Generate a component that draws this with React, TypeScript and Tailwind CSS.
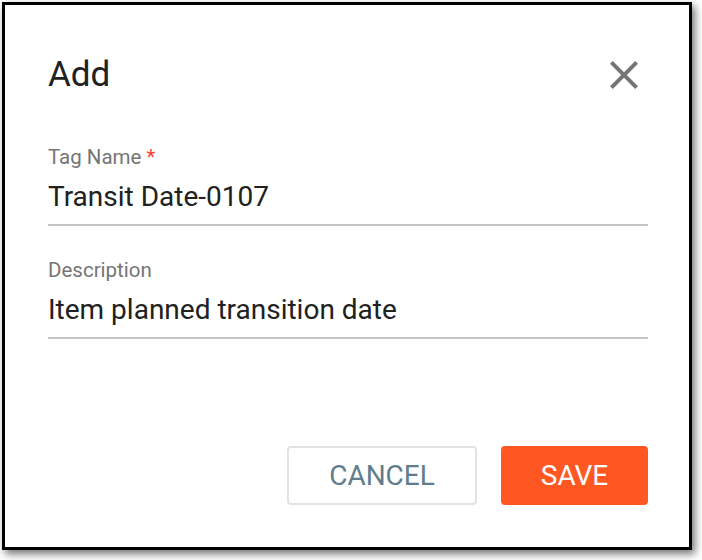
function Field({
  label,
  value,
  required,
}: {
  label: string;
  value: string;
  required?: boolean;
}) {
  return (
    <div className="flex flex-col">
      <div className="text-[20.5px] leading-[24px] text-[#757575]">
        {label}
        {required && <span className="text-[#f44336]"> *</span>}
      </div>
      <div className="mt-3 border-b-2 border-[#c4c4c4] pb-[11px] text-[28px] leading-[32px] text-[#212121]">
        {value}
      </div>
    </div>
  );
}

export default function App() {
  return (
    <div className="h-[560px] w-[702px] bg-white p-[2px] font-['Roboto',sans-serif]">
      <div className="flex h-[548px] w-[690px] flex-col border-[3px] border-black bg-white pl-[43px] pr-[41px] pt-[46px] pb-[42px] shadow-[3px_4px_8px_rgba(0,0,0,0.55)]">
        {/* Header */}
        <div className="flex h-12 items-center justify-between">
          <h2 className="text-[35px] leading-[48px] font-normal text-[#212121]">
            Add
          </h2>
          <button
            type="button"
            className="flex h-12 w-12 items-center justify-center text-[#757575]"
          >
            <svg viewBox="0 0 24 24" className="h-12 w-12" fill="currentColor">
              <path d="M19 6.41L17.59 5 12 10.59 6.41 5 5 6.41 10.59 12 5 17.59 6.41 19 12 13.41 17.59 19 19 17.59 13.41 12z" />
            </svg>
          </button>
        </div>

        {/* Fields */}
        <div className="mt-[46px] flex flex-col gap-8">
          <Field label="Tag Name" value="Transit Date-0107" required />
          <Field label="Description" value="Item planned transition date" />
        </div>

        <div className="flex-1" />

        {/* Actions */}
        <div className="flex justify-end gap-6">
          <button
            type="button"
            className="h-[59px] w-[190px] rounded-[4px] border-2 border-[#e3e3e3] bg-white text-[28px] text-[#5f7d8c]"
          >
            CANCEL
          </button>
          <button
            type="button"
            className="h-[59px] w-[147px] rounded-[4px] bg-[#ff5722] text-[28px] text-white"
          >
            SAVE
          </button>
        </div>
      </div>
    </div>
  );
}
